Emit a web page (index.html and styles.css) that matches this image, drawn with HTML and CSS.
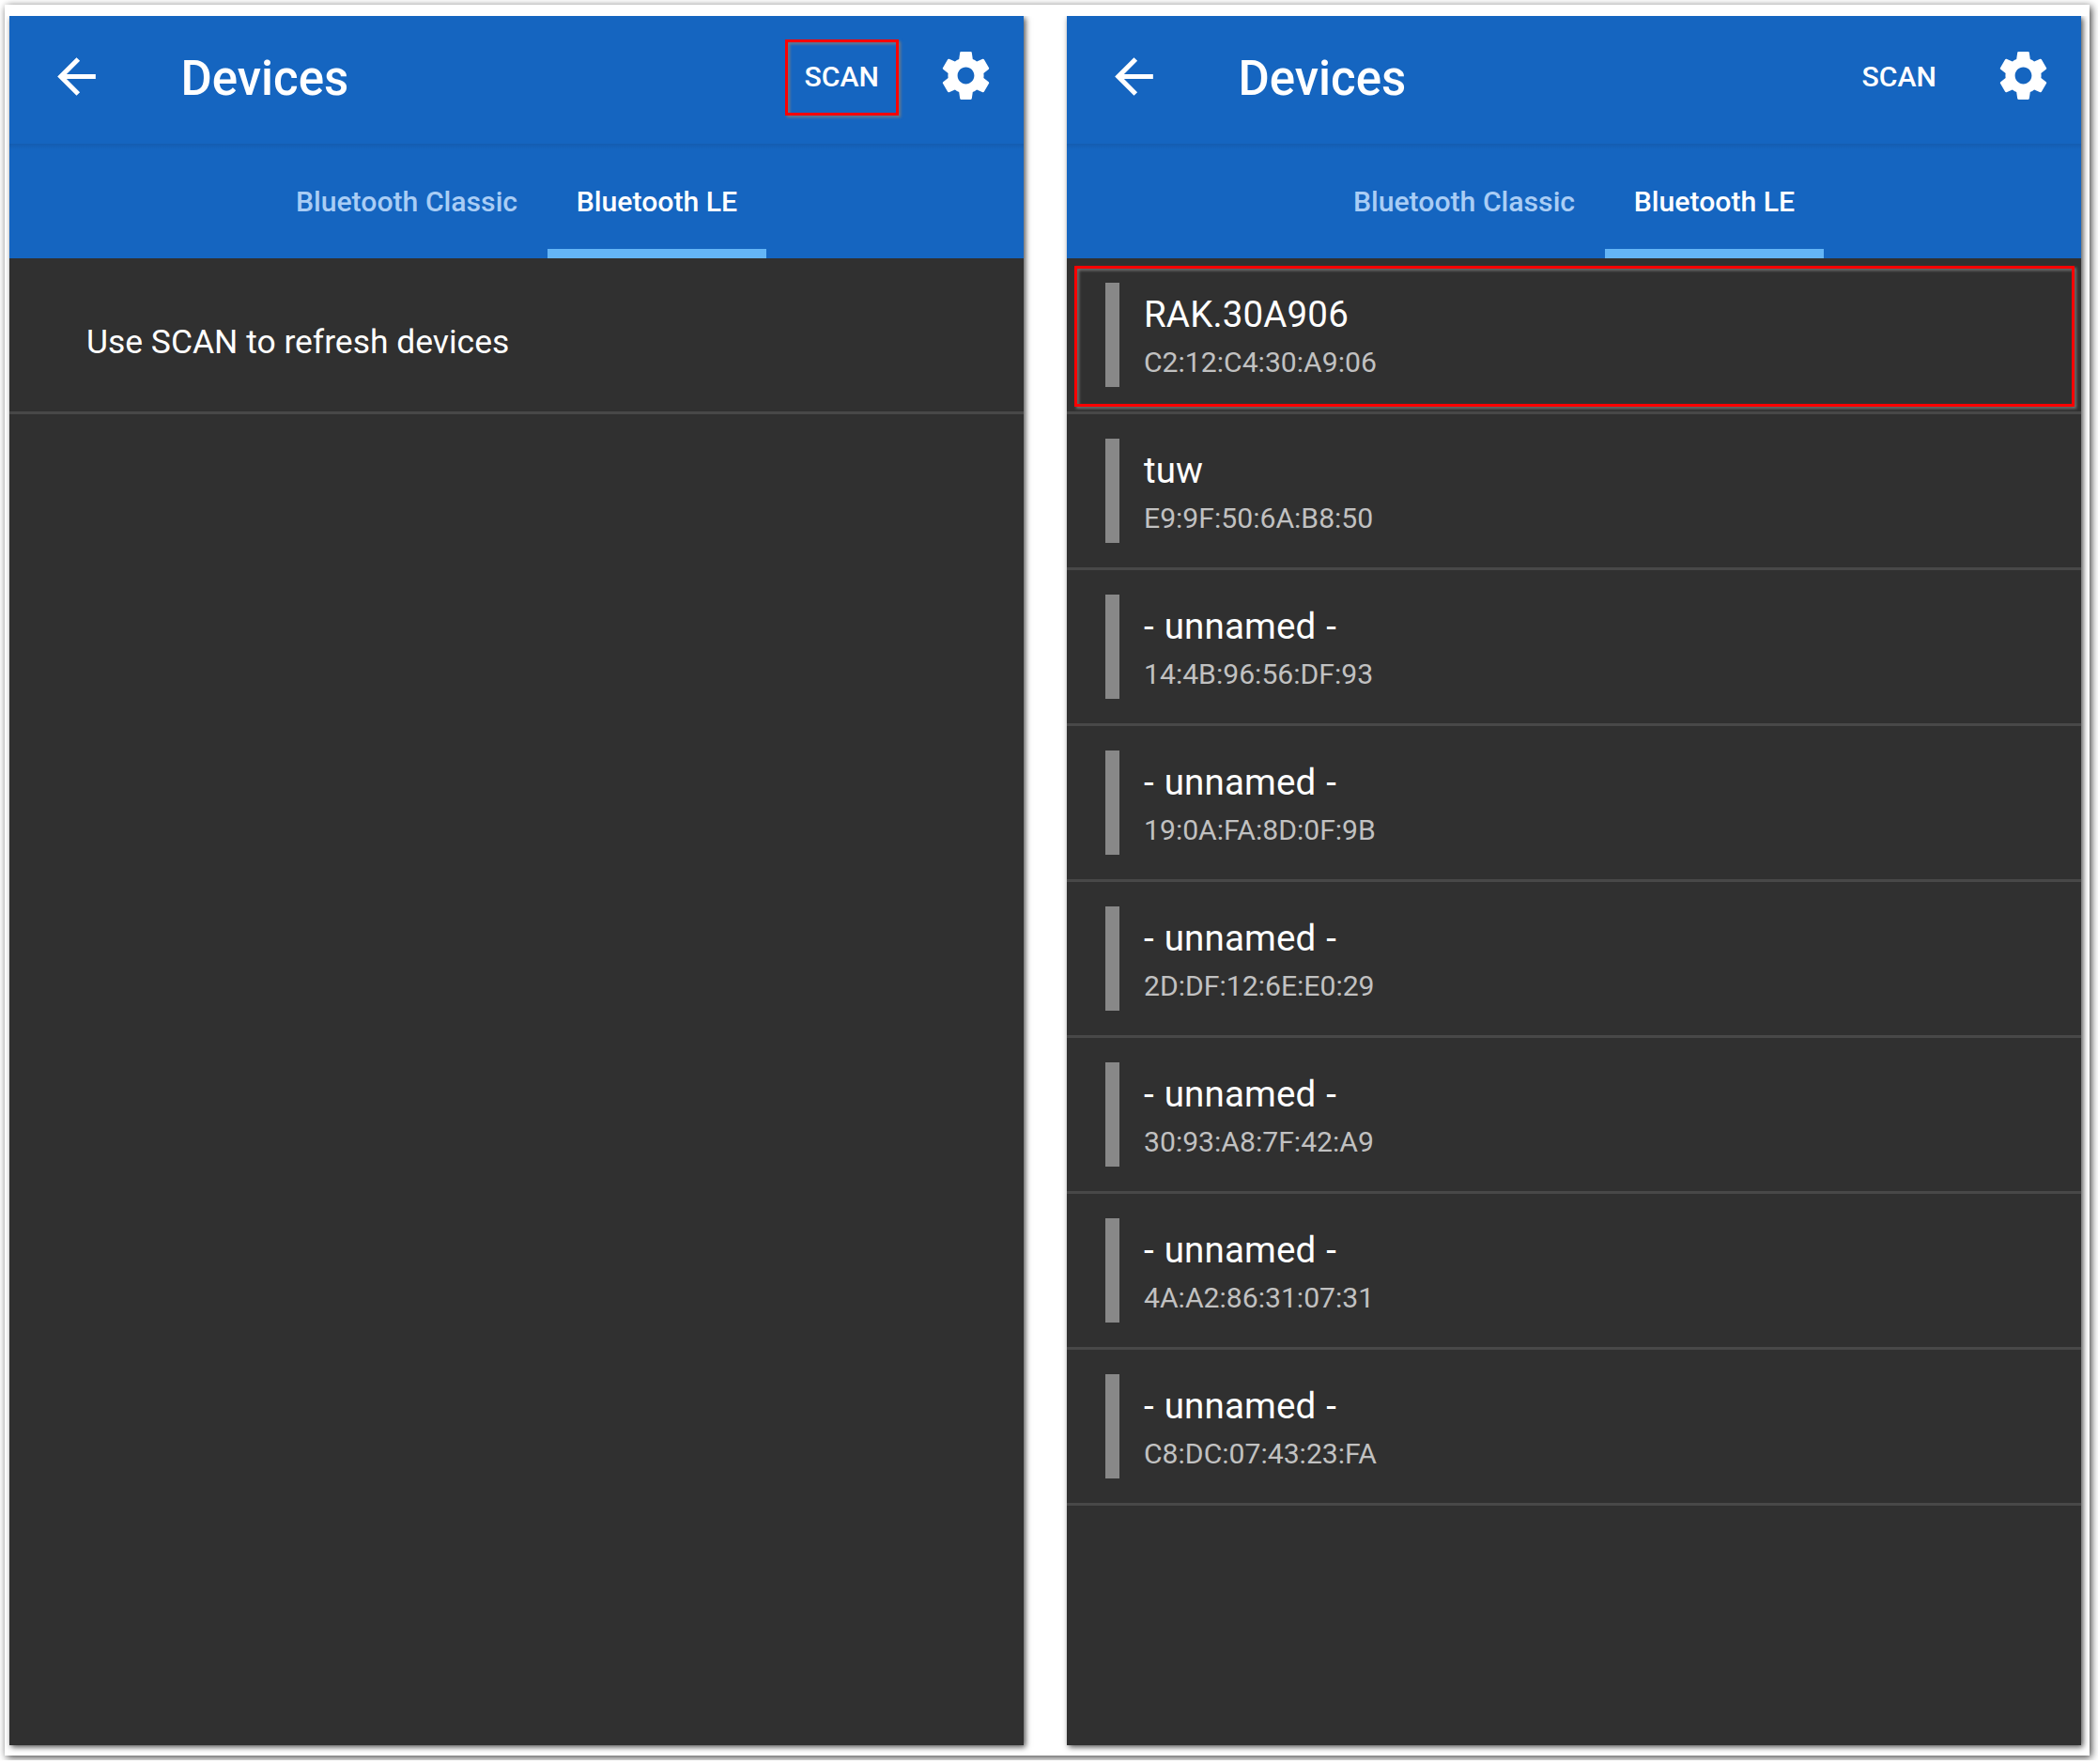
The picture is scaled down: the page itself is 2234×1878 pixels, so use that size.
FILE: index.html
```
<!DOCTYPE html>
<html lang="en">
<head>
<meta charset="utf-8">
<title>Devices</title>
<link rel="stylesheet" href="styles.css">
</head>
<body>
<svg class="defs" width="0" height="0" aria-hidden="true">
  <symbol id="back" viewBox="0 0 24 24"><path d="M20 11H7.83l5.59-5.59L12 4l-8 8 8 8 1.41-1.41L7.83 13H20v-2z"/></symbol>
  <symbol id="gear" viewBox="0 0 24 24"><path d="M19.43 12.98c.04-.32.07-.64.07-.98s-.03-.66-.07-.98l2.11-1.65c.19-.15.24-.42.12-.64l-2-3.46c-.12-.22-.39-.3-.61-.22l-2.49 1c-.52-.4-1.08-.73-1.69-.98l-.38-2.65C14.46 2.18 14.25 2 14 2h-4c-.25 0-.46.18-.49.42l-.38 2.65c-.61.25-1.17.59-1.69.98l-2.49-1c-.23-.09-.49 0-.61.22l-2 3.46c-.13.22-.07.49.12.64l2.11 1.65c-.04.32-.07.65-.07.98s.03.66.07.98l-2.11 1.65c-.19.15-.24.42-.12.64l2 3.46c.12.22.39.3.61.22l2.49-1c.52.4 1.08.73 1.69.98l.38 2.65c.03.24.24.42.49.42h4c.25 0 .46-.18.49-.42l.38-2.65c.61-.25 1.17-.59 1.69-.98l2.49 1c.23.09.49 0 .61-.22l2-3.46c.12-.22.07-.49-.12-.64l-2.11-1.65zM12 15.5c-1.93 0-3.5-1.57-3.5-3.5s1.57-3.5 3.5-3.5 3.5 1.57 3.5 3.5-1.57 3.5-3.5 3.5z"/></symbol>
</svg>
<main class="sheet">
  <section class="phone">
    <header class="appbar">
      <svg class="icon"><use href="#back"/></svg>
      <h1 class="title">Devices</h1>
      <span class="scan scan-marked">SCAN</span>
      <svg class="icon gear"><use href="#gear"/></svg>
    </header>
    <nav class="tabs">
      <span class="tab classic">Bluetooth Classic</span>
      <span class="tab active">Bluetooth LE</span>
    </nav>
    <p class="hint">Use SCAN to refresh devices</p>
  </section>
  <section class="phone">
    <header class="appbar">
      <svg class="icon"><use href="#back"/></svg>
      <h1 class="title">Devices</h1>
      <span class="scan">SCAN</span>
      <svg class="icon gear"><use href="#gear"/></svg>
    </header>
    <nav class="tabs">
      <span class="tab classic">Bluetooth Classic</span>
      <span class="tab active">Bluetooth LE</span>
    </nav>
    <ul class="list">
      <li class="device device-marked"><div class="name">RAK.30A906</div><div class="mac">C2:12:C4:30:A9:06</div></li>
      <li class="device"><div class="name">tuw</div><div class="mac">E9:9F:50:6A:B8:50</div></li>
      <li class="device"><div class="name">- unnamed -</div><div class="mac">14:4B:96:56:DF:93</div></li>
      <li class="device"><div class="name">- unnamed -</div><div class="mac">19:0A:FA:8D:0F:9B</div></li>
      <li class="device"><div class="name">- unnamed -</div><div class="mac">2D:DF:12:6E:E0:29</div></li>
      <li class="device"><div class="name">- unnamed -</div><div class="mac">30:93:A8:7F:42:A9</div></li>
      <li class="device"><div class="name">- unnamed -</div><div class="mac">4A:A2:86:31:07:31</div></li>
      <li class="device"><div class="name">- unnamed -</div><div class="mac">C8:DC:07:43:23:FA</div></li>
    </ul>
  </section>
</main>
</body>
</html>
```
FILE: styles.css
```
*, *::after { box-sizing: border-box; }
body {
  margin: 0;
  padding: 5px;
  background: #fff;
  font-family: Roboto, sans-serif;
  color: #fff;
  overflow: hidden;
}
.defs { display: block; width: 0; height: 0; }
.sheet {
  display: flex;
  gap: 46px;
  width: 2220px;
  height: 1864px;
  padding: 12px 5px 11px;
  background: #fff;
  box-shadow: 2px 2px 8px rgba(0, 0, 0, .75);
}
.phone {
  width: 1080px;
  height: 1841px;
  background: #303030;
  box-shadow: 2px 2px 6px rgba(0, 0, 0, .7);
  clip-path: inset(0 -12px -10px -6px);
}
.appbar {
  display: flex;
  align-items: center;
  height: 136px;
  padding: 0 31px 7px 41px;
  background: #1565c0;
}
.icon { width: 61px; height: 61px; fill: #fff; flex: none; }
.gear { position: relative; top: -1px; }
.title {
  margin: 0;
  padding: 5px 0 0 80.5px;
  font-size: 51px;
  font-weight: 500;
  line-height: 60px;
}
.scan {
  position: relative;
  margin-left: auto;
  margin-right: 62px;
  font-size: 30.2px;
  font-weight: 500;
  line-height: 36px;
}
.scan-marked::after, .device-marked::after {
  content: "";
  position: absolute;
  border: 3px solid #f00;
  filter: drop-shadow(2px 2px 1.5px rgba(125, 125, 125, .9));
}
.scan-marked::after { left: -21px; top: -21.5px; width: 121px; height: 81px; }
.tabs {
  display: flex;
  height: 122px;
  padding-left: 273px;
  background: linear-gradient(#145cb0, #1565c0 6px);
}
.tab {
  width: 233px;
  padding-top: 44px;
  font-size: 30.2px;
  font-weight: 500;
  line-height: 36px;
  text-align: center;
  white-space: nowrap;
}
.classic { width: 300px; color: #a9cdf5; }
.active { border-bottom: 10px solid #64b5f6; }
.hint {
  margin: 0;
  height: 166px;
  padding: 66px 0 0 82px;
  border-bottom: 3px solid #484848;
  font-size: 35.45px;
  line-height: 46px;
}
.list { margin: 0; padding: 0; list-style: none; }
.device {
  position: relative;
  height: 166px;
  padding: 37px 0 0 82px;
  border-bottom: 3px solid #484848;
  background: linear-gradient(#888, #888) 41px 26px / 15px 111px no-repeat;
}
.device-marked::after { left: 8px; top: 8px; width: 1065px; height: 150px; }
.name { font-size: 38.5px; line-height: 46px; letter-spacing: .15px; word-spacing: 1.2px; }
.mac { margin-top: 10px; font-size: 30.15px; line-height: 36px; color: #c1c1c1; }
```
